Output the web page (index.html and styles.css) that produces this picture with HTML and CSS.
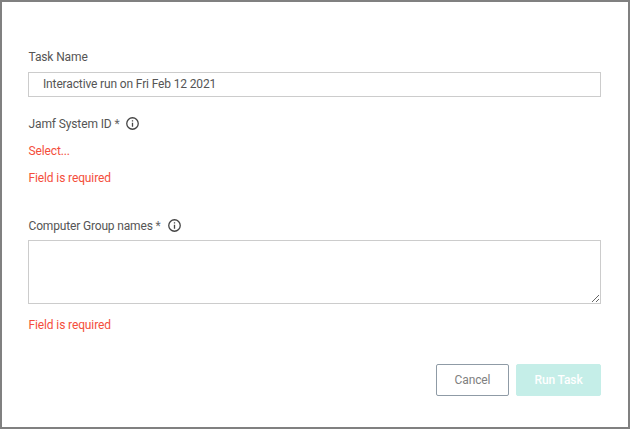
FILE: index.html
```html
<!DOCTYPE html>
<html lang="en">
<head>
<meta charset="utf-8">
<title>Run Task</title>
<link rel="stylesheet" href="styles.css">
</head>
<body>
<form class="dialog">
  <div class="field field-name">
    <label class="label">Task Name</label>
    <div class="input">Interactive run on Fri Feb 12 2021</div>
  </div>
  <div class="field field-system">
    <label class="label">Jamf System ID <span class="star">*</span>
      <svg class="info" viewBox="0 0 13 13"><circle cx="6.500" cy="6.500" r="5.750"/><path d="M6.500 3.200v1.300M6.500 5.800v4"/></svg>
    </label>
    <div class="select">Select...</div>
    <div class="error">Field is required</div>
  </div>
  <div class="field field-groups">
    <label class="label">Computer Group names <span class="star">*</span>
      <svg class="info" viewBox="0 0 13 13"><circle cx="6.500" cy="6.500" r="5.750"/><path d="M6.500 3.200v1.300M6.500 5.800v4"/></svg>
    </label>
    <textarea class="area"></textarea>
    <div class="error">Field is required</div>
  </div>
  <div class="actions">
    <button type="button" class="btn cancel">Cancel</button>
    <button type="button" class="btn run">Run Task</button>
  </div>
</form>
</body>
</html>
```
FILE: styles.css
```css
* { box-sizing: border-box; }
body { margin: 0; background: #fff; }
.dialog {
  height: 429px;
  border: 2px solid #808080;
  padding: 47px 27px 0 26px;
  font: 12px/16px Roboto, "Liberation Sans", sans-serif;
  letter-spacing: -0.12px;
  color: #555;
}
.label { display: flex; align-items: center; height: 16px; white-space: pre; }
.label, .select, .error { padding-left: 0.5px; }
.field-groups .label { letter-spacing: -0.16px; }
.star { color: #666; }
.info {
  width: 13px;
  height: 13px;
  margin: 0 0 1px 7px;
  fill: none;
  stroke: #444;
  stroke-width: 1.3;
}
.input {
  height: 25px;
  margin-top: 7px;
  padding: 0 14px;
  border: 1px solid #ccc;
  line-height: 23px;
  letter-spacing: -0.14px;
}
.field-system { margin-top: 19px; }
.field-groups { margin-top: 32px; }
.select, .error { color: #f44e3b; }
.select { margin: 11px 0; }
.area {
  display: block;
  width: 100%;
  height: 64px;
  margin: 6px 0 13px;
  border: 1px solid #ccc;
  resize: vertical;
}
.actions { display: flex; justify-content: flex-end; gap: 7px; margin-top: 31px; }
.btn {
  height: 32px;
  padding: 0;
  border: 1px solid #8f9ba6;
  border-radius: 2px;
  background: #fff;
  font: 12px Roboto, sans-serif;
  letter-spacing: -0.12px;
  color: #808080;
}
.cancel { width: 73px; }
.run { width: 85px; border-color: #c5eee8; background: #c5eee8; color: #fff; font-weight: 500; }
```
